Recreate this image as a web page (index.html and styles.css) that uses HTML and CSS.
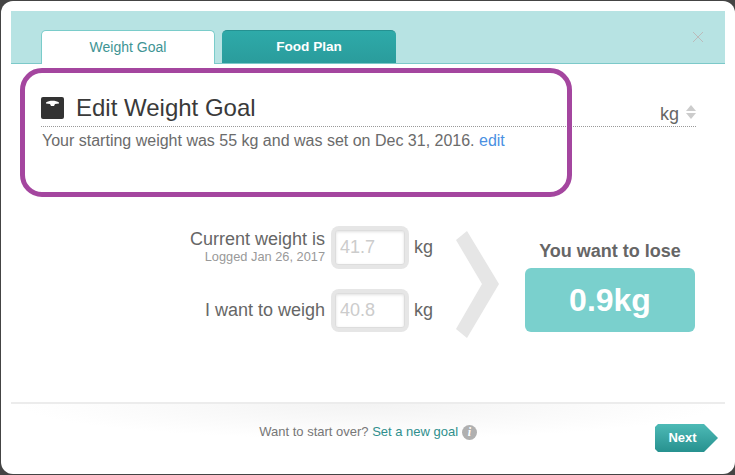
FILE: index.html
```html
<!DOCTYPE html>
<html lang="en">
<head>
    <meta charset="UTF-8">
    <meta name="viewport" content="width=device-width, initial-scale=1.0">
    <title>Edit Weight Goal</title>
    <link rel="stylesheet" href="styles.css">
</head>
<body>

<div class="modal">
    <div class="tabbar">
        <div class="tab tab-active">Weight Goal</div>
        <div class="tab tab-other">Food Plan</div>
        <svg class="close" width="12" height="12" viewBox="0 0 12 12">
            <path d="M1 1 L11 11 M11 1 L1 11" stroke="#bbb" stroke-width="1" fill="none"/>
        </svg>
    </div>

    <div class="section">
        <div class="section-head">
            <svg class="scale-icon" width="23" height="22" viewBox="0 0 23 22">
                <rect x="0" y="0" width="23" height="22" rx="2" fill="#333"/>
                <path d="M5 5.5 C8 3 15 3 18 5.5 L18 6.5 L14 7 L13 9 L10 9 L9 7 L5 6.5 Z" fill="#fff"/>
            </svg>
            <h1 class="title">Edit Weight Goal</h1>
            <div class="unit">kg
                <span class="arrows"><i class="arrow-up"></i><i class="arrow-down"></i></span>
            </div>
        </div>
        <p class="started">Your starting weight was 55 kg and was set on Dec 31, 2016. <a href="#">edit</a></p>
    </div>

    <div class="goal">
        <div class="fields">
            <div class="field">
                <div class="field-label">Current weight is<small>Logged Jan 26, 2017</small></div>
                <div class="input-wrap"><input class="input" type="text" placeholder="41.7"></div>
                <span class="field-unit">kg</span>
            </div>
            <div class="field">
                <div class="field-label">I want to weigh</div>
                <div class="input-wrap"><input class="input" type="text" placeholder="40.8"></div>
                <span class="field-unit">kg</span>
            </div>
        </div>
        <svg class="chevron" width="44" height="108" viewBox="0 0 44 108">
            <path d="M1 9 L12 0 L44 53 L12 107 L1 98 L27 53 Z" fill="#e6e6e6"/>
        </svg>
        <div class="result">
            <div class="result-label">You want to lose</div>
            <div class="result-box">0.9kg</div>
        </div>
    </div>

    <div class="footer">
        <div class="start-over">
            Want to start over? <a href="#">Set a new goal</a>
            <span class="info">i</span>
        </div>
        <a class="next" href="#">Next</a>
    </div>
</div>

<!-- Purple annotation drawn over the section -->
<div class="highlight"></div>

</body>
</html>
```

FILE: styles.css
```css
/* Weight goal dialog */
html, body {
    height: 100%;
}
body {
    margin: 0;
    background-color: #444;
    font-family: "Liberation Sans", Arial, sans-serif;
    color: #666;
    overflow: hidden;
}
.modal {
    box-sizing: border-box;
    width: 734px;
    height: 473px;
    margin: 1px 0 0 1px;
    padding: 10px;
    background-color: #fff;
    border-radius: 12px;
    display: flex;
    flex-direction: column;
}
.tabbar {
    box-sizing: border-box;
    height: 53px;
    padding: 19px 0 0 30px;
    background-color: #b7e3e3;
    border-bottom: 1px solid #7cc9c9;
    display: flex;
    gap: 7px;
    position: relative;
}
.tab {
    box-sizing: border-box;
    width: 174px;
    height: 33px;
    border-radius: 5px 5px 0 0;
    font-size: 14px;
    line-height: 32px;
    text-align: center;
}
.tab-active {
    height: 34px;
    background-color: #fff;
    border: 1px solid #7accca;
    border-bottom: none;
    color: #3e9494;
}
.tab-other {
    background: linear-gradient(#2eaaa9, #2a9c9c);
    border-top: 1px solid #259191;
    color: #fff;
    font-size: 13.6px;
    font-weight: bold;
}
.close {
    position: absolute;
    right: 21px;
    top: 20px;
}
.section {
    padding: 33px 29px 0 30px;
}
.section-head {
    display: flex;
    align-items: flex-start;
    height: 29px;
    border-bottom: 1px dotted #999;
}
.scale-icon {
    margin-right: 12px;
}
.title {
    margin: 0;
    font-size: 24px;
    font-weight: normal;
    line-height: 22px;
    color: #3a3a3a;
    flex: 1;
}
.unit {
    font-size: 18px;
    line-height: 20px;
    margin-top: 7px;
    display: flex;
    align-items: center;
    gap: 7px;
}
.arrows {
    display: flex;
    flex-direction: column;
    gap: 2px;
    margin-top: -4px;
}
.arrow-up, .arrow-down {
    width: 0;
    height: 0;
    border-left: 5px solid transparent;
    border-right: 5px solid transparent;
}
.arrow-up {
    border-bottom: 6px solid #ccc;
}
.arrow-down {
    border-top: 6px solid #ccc;
}
.started {
    margin: 5px 0 0 1px;
    font-size: 16px;
    line-height: 18px;
    color: #6b6b6b;
}
.started a {
    color: #4a90e2;
    text-decoration: none;
}
.goal {
    display: flex;
    align-items: flex-start;
    padding-top: 73px;
    height: 110px;
}
.fields {
    width: 427px;
    display: flex;
    flex-direction: column;
    gap: 20px;
    margin-top: 3px;
}
.field {
    display: flex;
    justify-content: flex-end;
    align-items: center;
    height: 43px;
}
.field-label {
    padding-bottom: 2px;
    font-size: 18px;
    text-align: right;
    line-height: 18px;
}
.field-label small {
    display: block;
    margin: 2px 0 1px;
    font-size: 12.8px;
    line-height: 13px;
    color: #999;
}
.input-wrap {
    box-sizing: border-box;
    width: 78px;
    height: 43px;
    margin-left: 6px;
    padding: 4px;
    background-color: #e6e6e6;
    border-radius: 8px;
}
.input {
    box-sizing: border-box;
    width: 70px;
    height: 35px;
    padding: 0 4px;
    border: 1px solid #ddd;
    border-radius: 3px;
    box-shadow: inset 0 1px 3px rgba(0, 0, 0, 0.12);
    font-family: inherit;
    font-size: 18px;
    outline: none;
}
.input::placeholder {
    color: #ccc;
    opacity: 1;
}
.field-unit {
    width: 24px;
    margin-left: 5px;
    font-size: 18px;
}
.chevron {
    margin: 8px 0 0 17px;
}
.result {
    width: 170px;
    margin-left: 26px;
    text-align: center;
}
.result-label {
    font-size: 18px;
    font-weight: bold;
    line-height: 24px;
    margin-top: 16px;
}
.result-box {
    height: 64px;
    margin-top: 5px;
    background-color: #7ad0cd;
    border-radius: 6px;
    color: #fff;
    font-size: 32px;
    font-weight: bold;
    line-height: 64px;
}
.footer {
    margin-top: auto;
    height: 60px;
    border-top: 2px solid #ececec;
    background: radial-gradient(ellipse 350px 35px at 50% 0, #f3f3f3, #fff);
    display: flex;
    position: relative;
    justify-content: center;
}
.start-over {
    font-size: 13px;
    margin-top: 20px;
    color: #777;
}
.start-over a {
    color: #2f8f8d;
    text-decoration: none;
}
.info {
    display: inline-block;
    width: 15px;
    height: 15px;
    border-radius: 50%;
    background-color: #b0b0b0;
    color: #fff;
    font-family: "Liberation Serif", serif;
    font-style: italic;
    font-weight: bold;
    font-size: 12px;
    line-height: 15px;
    text-align: center;
}
.next {
    position: absolute;
    left: 644px;
    top: 20px;
    box-sizing: border-box;
    width: 63px;
    height: 28px;
    padding-right: 8px;
    background: linear-gradient(#4dbab6, #27918f);
    clip-path: polygon(0 3px, 3px 0, 49px 0, 63px 14px, 49px 28px, 3px 28px, 0 25px);
    color: #fff;
    font-size: 13px;
    font-weight: bold;
    line-height: 28px;
    text-align: center;
    text-decoration: none;
}
.highlight {
    position: absolute;
    left: 20px;
    top: 68px;
    box-sizing: border-box;
    width: 552px;
    height: 129px;
    border: 5px solid #a4469f;
    border-radius: 22px;
}
```
